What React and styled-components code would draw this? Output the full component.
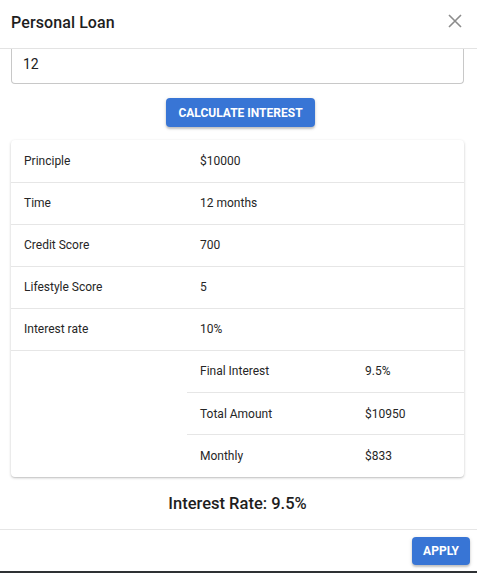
import React from "react";
import styled, { createGlobalStyle } from "styled-components";

const GlobalStyle = createGlobalStyle`
  html, body {
    margin: 0;
    padding: 0;
    background: #2e3134;
  }
  body {
    font-family: Roboto, "Liberation Sans", Arial, sans-serif;
    color: rgba(0, 0, 0, 0.87);
  }
`;

const rows = [
  { label: "Principle", value: "$10000" },
  { label: "Time", value: "12 months" },
  { label: "Credit Score", value: "700" },
  { label: "Lifestyle Score", value: "5" },
  { label: "Interest rate", value: "10%" },
];

const results = [
  { label: "Final Interest", value: "9.5%" },
  { label: "Total Amount", value: "$10950" },
  { label: "Monthly", value: "$833" },
];

const CloseIcon = () => (
  <svg width="14" height="14" viewBox="0 0 14 14" fill="none">
    <path d="M1 1L13 13M13 1L1 13" stroke="#8c8c8c" strokeWidth="1.6" />
  </svg>
);

const App = () => {
  return (
    <>
      <GlobalStyle />
      <Dialog>
        <Header>
          <Title>Personal Loan</Title>
          <CloseButton aria-label="close">
            <CloseIcon />
          </CloseButton>
        </Header>
        <Content>
          <Field>
            <FieldInput defaultValue="12" />
          </Field>
          <ButtonRow>
            <PrimaryButton>Calculate Interest</PrimaryButton>
          </ButtonRow>
          <Paper>
            <Table>
              <tbody>
                {rows.map((row) => (
                  <Row key={row.label}>
                    <LabelCell>{row.label}</LabelCell>
                    <Cell>{row.value}</Cell>
                  </Row>
                ))}
                <Row $last>
                  <LabelCell />
                  <NestedCell>
                    <Table>
                      <tbody>
                        {results.map((item, i) => (
                          <Row key={item.label} $last={i === results.length - 1}>
                            <NestedLabel>{item.label}</NestedLabel>
                            <Cell>{item.value}</Cell>
                          </Row>
                        ))}
                      </tbody>
                    </Table>
                  </NestedCell>
                </Row>
              </tbody>
            </Table>
          </Paper>
          <Result>Interest Rate: 9.5%</Result>
        </Content>
        <Footer>
          <PrimaryButton $small>Apply</PrimaryButton>
        </Footer>
      </Dialog>
    </>
  );
};

export default App;

const Dialog = styled.div`
  width: 477px;
  height: 571px;
  background: #fff;
  display: flex;
  flex-direction: column;
  overflow: hidden;
`;

const Header = styled.div`
  height: 49px;
  box-sizing: border-box;
  padding: 0 15px 3px 11px;
  display: flex;
  align-items: center;
  justify-content: space-between;
  border-bottom: 1px solid #e3e3e3;
  flex-shrink: 0;
`;

const Title = styled.h2`
  margin: 0;
  font-size: 16px;
  font-weight: 500;
  color: #1e1e1e;
  letter-spacing: 0.1px;
`;

const CloseButton = styled.button`
  border: none;
  background: none;
  padding: 0;
  display: flex;
  margin-top: -4px;
  cursor: pointer;
`;

const Content = styled.div`
  flex: 1;
  padding: 0 13px 0 11px;
  display: flex;
  flex-direction: column;
`;

const Field = styled.div`
  height: 35px;
  box-sizing: border-box;
  border: 1px solid #c8c8c8;
  border-top: none;
  border-radius: 0 0 4px 4px;
  display: flex;
  align-items: center;
  padding: 0 11px 4px;
`;

const FieldInput = styled.input`
  border: none;
  outline: none;
  width: 100%;
  padding: 0;
  font-family: inherit;
  font-size: 14px;
  color: #222;
  background: transparent;
`;

const ButtonRow = styled.div`
  display: flex;
  justify-content: center;
  margin-top: 14px;
  padding-left: 6px;
`;

const PrimaryButton = styled.button`
  height: ${(p) => (p.$small ? "28px" : "29px")};
  padding: 0 ${(p) => (p.$small ? "11px" : "12px")};
  border: none;
  border-radius: 4px;
  background: #3875d5;
  color: #fff;
  font-family: inherit;
  font-size: 12px;
  font-weight: 700;
  letter-spacing: 0;
  text-transform: uppercase;
  box-shadow: 0 2px 2px rgba(0, 0, 0, 0.18), 0 1px 4px rgba(0, 0, 0, 0.12);
  cursor: pointer;
`;

const Paper = styled.div`
  margin-top: 13px;
  border-radius: 4px;
  background: #fff;
  box-shadow: 0 1px 3px rgba(0, 0, 0, 0.2), 0 1px 1px rgba(0, 0, 0, 0.08);
  overflow: hidden;
`;

const Table = styled.table`
  width: 100%;
  border-collapse: collapse;
  table-layout: fixed;
`;

const Row = styled.tr`
  height: 42px;
  & > td {
    border-bottom: ${(p) => (p.$last ? "none" : "1px solid #e6e6e6")};
  }
`;

const Cell = styled.td`
  padding: 0 13px;
  font-size: 12px;
  color: #262626;
  vertical-align: middle;
`;

const LabelCell = styled(Cell)`
  width: 150px;
`;

const NestedLabel = styled(Cell)`
  width: 139px;
`;

const NestedCell = styled.td`
  padding: 0;
`;

const Result = styled.div`
  margin-top: 17px;
  text-align: center;
  font-size: 16.5px;
  font-weight: 500;
  color: #1e1e1e;
`;

const Footer = styled.div`
  height: 42px;
  box-sizing: border-box;
  border-top: 1px solid #e6e6e6;
  display: flex;
  align-items: center;
  justify-content: flex-end;
  padding: 0 7px 0 0;
  flex-shrink: 0;
`;
